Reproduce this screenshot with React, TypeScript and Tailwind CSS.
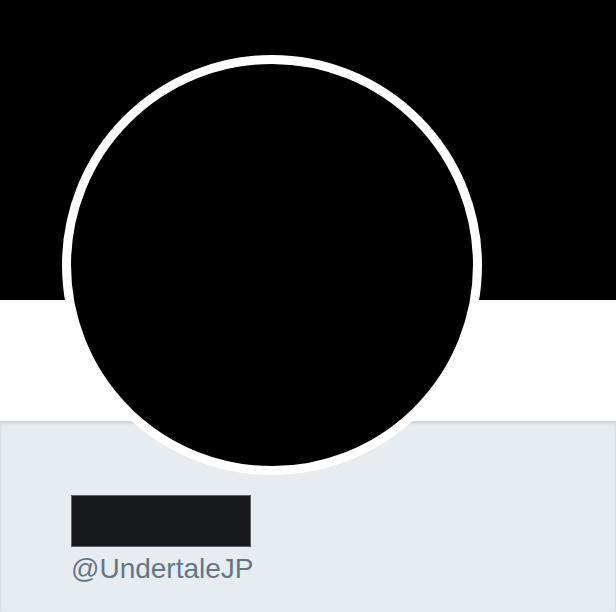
export default function App() {
  return (
    <div className="relative w-[616px] h-[612px] overflow-hidden bg-[#e6ecf0] font-['Liberation_Sans',Arial,sans-serif]">
      <div className="h-[300px] bg-black" />
      <div className="h-[121px] bg-white" />
      <section className="h-[191px] px-[71px] pt-[74px] shadow-[inset_0_2px_3px_rgba(0,0,0,0.12)]">
        <div className="w-[180px] h-[52px] bg-[#16181b] border border-[#5c6167]" />
        <p className="mt-[5px] text-[28px] leading-[34px] text-[#657786]">@UndertaleJP</p>
      </section>

      <div className="absolute left-[62px] top-[55px] w-[420px] h-[420px] rounded-full border-[9px] border-white bg-black" />
    </div>
  );
}
